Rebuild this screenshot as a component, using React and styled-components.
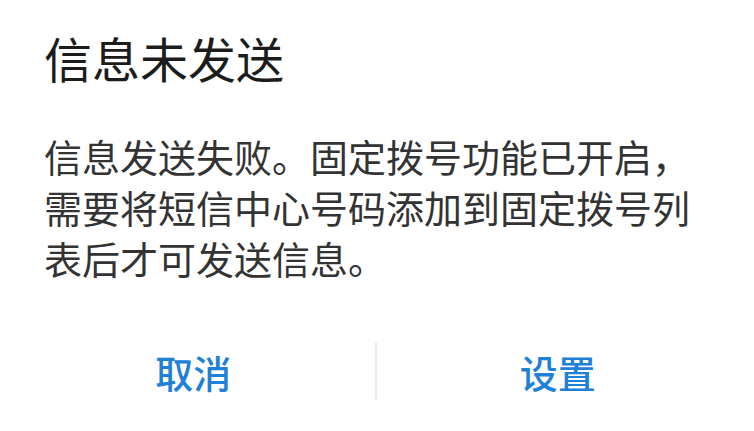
import React from "react";
import styled, { createGlobalStyle } from "styled-components";

const GlobalStyle = createGlobalStyle`
  html, body {
    margin: 0;
    padding: 0;
    background: #ffffff;
  }
  body {
    font-family: "Noto Sans CJK SC", "Noto Sans", sans-serif;
  }
`;

const Dialog = styled.div`
  width: 754px;
  height: 431px;
  background: #ffffff;
  display: flex;
  flex-direction: column;
  box-sizing: border-box;
  overflow: hidden;
`;

const Title = styled.h1`
  margin: 29px 0 0 0;
  padding: 0 44px;
  font-size: 48px;
  line-height: 56px;
  font-weight: 400;
  color: #1c1c1c;
`;

const Message = styled.p`
  margin: 45px 0 0 0;
  padding: 0 44px;
  width: 660px;
  font-size: 38px;
  line-height: 51px;
  font-weight: 400;
  color: #333333;
`;

const Actions = styled.div`
  margin-top: auto;
  margin-bottom: 31px;
  padding: 0 15px 0 12px;
  height: 58px;
  display: flex;
  align-items: center;
`;

const ActionButton = styled.button`
  flex: 1;
  height: 100%;
  border: none;
  background: transparent;
  padding: 0;
  font-family: "Noto Sans CJK SC", "Noto Sans", sans-serif;
  font-size: 38px;
  font-weight: 500;
  color: #1f80d8;
  cursor: pointer;
`;

const Divider = styled.div`
  width: 2px;
  align-self: stretch;
  background: #ececec;
`;

export default function App() {
  return (
    <>
      <GlobalStyle />
      <Dialog>
        <Title>信息未发送</Title>
        <Message>
          信息发送失败。固定拨号功能已开启，需要将短信中心号码添加到固定拨号列表后才可发送信息。
        </Message>
        <Actions>
          <ActionButton>取消</ActionButton>
          <Divider />
          <ActionButton>设置</ActionButton>
        </Actions>
      </Dialog>
    </>
  );
}
